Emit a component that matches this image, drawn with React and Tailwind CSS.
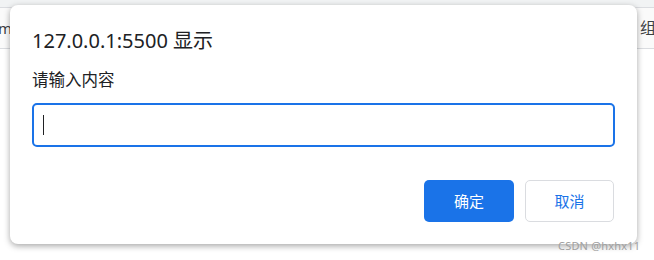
import React from 'react';

export default function App() {
  return (
    <div
      className="relative w-[654px] h-[260px] overflow-hidden bg-white"
      style={{ fontFamily: '"Noto Sans", "Noto Sans CJK SC", sans-serif' }}
    >
      {/* browser page behind the dialog */}
      <div className="flex flex-col">
        <div className="h-[7px] bg-[#f1f3f4]" />
        <div className="h-[42px] flex items-center justify-between border-t border-b border-[#dadce0] bg-[#fafafa]">
          <span className="text-[15px] text-[#3c4043] -ml-[2px]">m</span>
          <span className="text-[16px] text-[#3c4043] mr-[-2px]">组</span>
        </div>
      </div>

      {/* prompt dialog */}
      <div className="absolute left-[10px] top-[5px] w-[627px] h-[239px] bg-white rounded-[8px] shadow-[0_2px_6px_rgba(0,0,0,0.35)] px-[22px] pt-[22px]">
        <div className="text-[20px] leading-[28px] text-[#202124]">127.0.0.1:5500 显示</div>
        <div className="mt-[14px] text-[16.5px] leading-[22px] text-[#202124]">请输入内容</div>
        <div className="mt-[12px] h-[44px] border-2 border-[#1a73e8] rounded-[5px] flex items-center pl-[9px]">
          <div className="w-[1px] h-[20px] bg-[#202124]" />
        </div>
        <div className="mt-[33px] flex justify-end gap-[11px] pr-[1px]">
          <button className="w-[90px] h-[42px] rounded-[5px] bg-[#1a73e8] text-white text-[15px]">确定</button>
          <button className="w-[89px] h-[42px] rounded-[5px] border border-[#dadce0] bg-white text-[#1a73e8] text-[15px]">取消</button>
        </div>
      </div>

      {/* watermark */}
      <div className="absolute left-[558px] top-[238px] text-[11px] text-[#a0a0a0] tracking-[0.2px]">CSDN @hxhx11</div>
    </div>
  );
}
